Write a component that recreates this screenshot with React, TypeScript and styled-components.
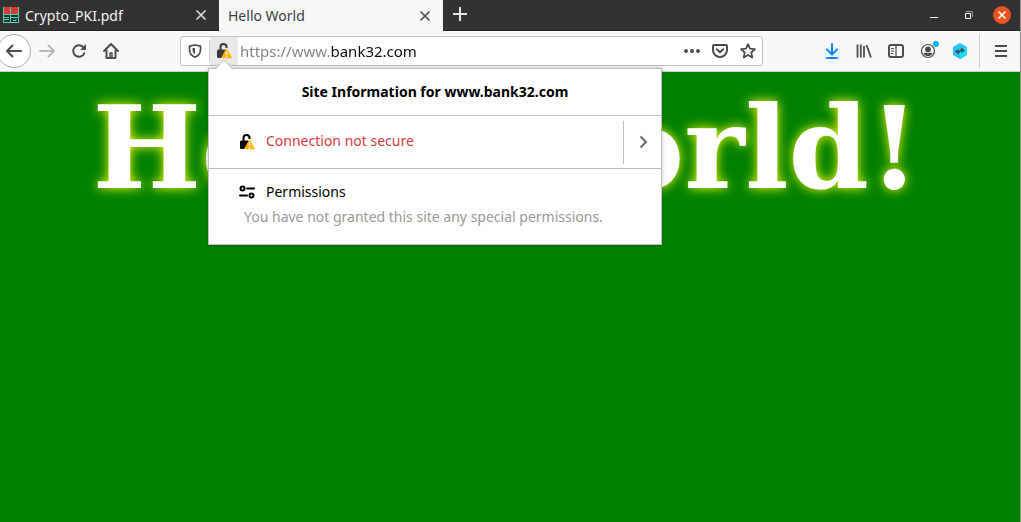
import React from 'react';
import styled, { createGlobalStyle, css } from 'styled-components';

const Global = createGlobalStyle`
  *, *::before, *::after { box-sizing: border-box; }
  html, body, #root { height: 100%; }
  body {
    margin: 0;
    overflow: hidden;
    font-family: "Noto Sans", "Open Sans", sans-serif;
    font-size: 14px;
    color: #000;
  }
  button { font: inherit; color: inherit; border: 0; padding: 0; background: none; }
  svg { display: block; flex: none; }
`;

const Window = styled.div`
  display: flex;
  flex-direction: column;
  height: 100vh;
  background: #f8f8f8;
  border-right: 1px solid #8f8f8f;
`;

const TabStrip = styled.header`
  display: flex;
  height: 31px;
  background: #333132;
  border-bottom: 1px solid #232122;
`;

const Tab = styled.div<{ $active?: boolean }>`
  display: flex;
  align-items: center;
  gap: 5px;
  height: 30px;
  padding: 0 10px 0 2px;
  width: 219px;
  color: #f4f4f4;
  ${p => p.$active && css`
    height: 31px;
    width: 224px;
    padding-left: 9px;
    background: #f8f8f8;
    color: #3c3c40;
  `}
`;

const TabTitle = styled.span`
  flex: 1;
  white-space: nowrap;
`;

const IconButton = styled.button<{ $size?: number }>`
  display: flex;
  align-items: center;
  justify-content: center;
  width: ${p => p.$size ?? 32}px;
  height: ${p => p.$size ?? 32}px;
`;

const NewTab = styled(IconButton)`
  height: 30px;
  width: 34px;
`;

const WindowControls = styled.div`
  display: flex;
  align-items: center;
  gap: 15px;
  height: 30px;
  margin-left: auto;
  padding-right: 9px;
`;

const CloseWindow = styled(IconButton)`
  border-radius: 50%;
  background: #e95420;
`;

const Toolbar = styled.nav`
  display: flex;
  align-items: center;
  height: 41px;
  border-bottom: 1px solid #ccc;
  color: #4c4c4f;
`;

const BackButton = styled(IconButton)`
  border: 1px solid #b1b1b1;
  border-radius: 50%;
  background: #fff;
  margin-left: -3px;
`;

const AddressBar = styled.div`
  position: relative;
  display: flex;
  align-items: center;
  flex: 1;
  height: 30px;
  margin: 0 53px;
  border: 1px solid #c0c0c0;
  border-radius: 3px;
  background: #fff;
`;

const ShieldButton = styled(IconButton)`
  border-right: 1px solid #ccc;
  width: 29px;
  height: 22px;
`;

const IdentityButton = styled(IconButton)`
  background: #e8e8e8;
  width: 28px;
  height: 28px;
`;

const UrlInput = styled.input`
  flex: 1;
  min-width: 0;
  height: 28px;
  border: 0;
  padding: 0 0 0 2px;
  outline: 0;
  font: inherit;
  font-size: 15px;
  color: transparent;
  background: linear-gradient(to right, #808080 92px, #0c0c0d 92px);
  background-clip: text;
`;

const ToolGroup = styled.div`
  display: flex;
  align-items: center;
`;

const MenuArea = styled.div`
  display: flex;
  align-items: center;
  height: 34px;
  margin-left: 3px;
  padding: 0 3px 0 5px;
  border-left: 1px solid #ccc;
`;

const Page = styled.main`
  flex: 1;
  overflow: hidden;
  background: green;
`;

const Heading = styled.h1`
  margin: 9px 8px 0 0;
  text-align: center;
  white-space: nowrap;
  font: bold 115px/134px "DejaVu Serif", serif;
  font-kerning: none;
  color: #fff;
  text-shadow: 0 0 12px yellow;
`;

const Popup = styled.section`
  position: absolute;
  top: 31px;
  left: 27px;
  width: 454px;
  z-index: 1;
  border: 1px solid #bfbfbf;
  background: #fff;
  color: #000;
  box-shadow: 0 0 4px rgba(0, 0, 0, 0.25);
`;

const PopupArrow = styled.svg`
  position: absolute;
  top: -10px;
  left: 6px;
`;

const PopupTitle = styled.h2`
  margin: 0;
  text-align: center;
  font-size: 14px;
  line-height: 46px;
  border-bottom: 1px solid #bfbfbf;
`;

const Connection = styled.div`
  display: flex;
  align-items: center;
  height: 53px;
  padding-left: 30px;
  border-bottom: 1px solid #bfbfbf;
  gap: 11px;
  color: #d7393f;
`;

const ConnectionText = styled.span`
  flex: 1;
  padding-bottom: 3px;
`;

const DetailsButton = styled(IconButton)`
  width: 38px;
  height: 43px;
  border-left: 1px solid #bfbfbf;
`;

const Permissions = styled.div`
  padding: 13px 30px 17px;
`;

const PermissionsTitle = styled.h3`
  display: flex;
  align-items: center;
  gap: 11px;
  margin: 0;
  font-size: 14px;
  font-weight: 400;
  line-height: 20px;
`;

const PermissionsText = styled.p`
  margin: 5px 0 0 5px;
  line-height: 20px;
  color: #999;
`;

const CloseIcon = ({ color = '#4c4c4f' }: { color?: string }) => (
  <svg width="16" height="16" viewBox="0 0 16 16" fill="none" stroke={color} strokeWidth="1.7">
    <path d="M3.5 3.5l9 9M12.5 3.5l-9 9" />
  </svg>
);

const ArrowIcon = ({ flip = false, color = '#4c4c4f' }: { flip?: boolean; color?: string }) => (
  <svg width="18" height="18" viewBox="0 0 18 18" fill="none" stroke={color} strokeWidth="2" strokeLinecap="round" strokeLinejoin="round">
    <path d={flip ? 'M2 9h14M10.500 3.500L16 9l-5.500 5.500' : 'M16 9H2M7.500 3.500L2 9l5.500 5.500'} />
  </svg>
);

const LockIcon = ({ color }: { color: string }) => (
  <svg width="16" height="16" viewBox="0 0 16 16">
    <path d="M3.500 8V4.500a3 3 0 0 1 6 0v1" fill="none" stroke={color} strokeWidth="2" transform="translate(1 -.5)" />
    <rect x="1" y="6.500" width="9" height="8.500" rx="1.500" fill={color} />
    <path d="M10.500 6.500L15 14.500H6z" fill="#ffb200" stroke="#ffb200" strokeWidth="1.500" strokeLinejoin="round" />
    <path d="M10.500 8.500v3.500M10.500 13v1.400" stroke="#fff" strokeWidth="1.400" />
  </svg>
);

export default function App() {
  return (
    <Window>
      <Global />
      <TabStrip>
        <Tab>
          <svg width="18" height="18" viewBox="0 0 18 18">
            <rect x="1" width="16" height="16" y="1" fill="#54d0b4" />
            <path d="M2 1h6v7H2zM9 1h7v7H9z" fill="#e8392c" />
            <path d="M2 9h6v7H2zM9 9h7v2H9zM9 12h7v4H9z" fill="#17332f" />
            <path d="M2 3.500h4M4 6h4M11 3.500h5M9 6h4" stroke="#8c4a3c" />
            <path d="M2 11.500h5M2 13.500h5M11 14.500h3v-1.500" stroke="#54d0b4" fill="none" />
          </svg>
          <TabTitle>Crypto_PKI.pdf</TabTitle>
          <IconButton $size={16} aria-label="Close tab"><CloseIcon color="#d8d8d8" /></IconButton>
        </Tab>
        <Tab $active>
          <TabTitle>Hello World</TabTitle>
          <IconButton $size={16} aria-label="Close tab"><CloseIcon /></IconButton>
        </Tab>
        <NewTab aria-label="New tab">
          <svg width="16" height="16" viewBox="0 0 16 16" stroke="#e6e6e6" strokeWidth="2"><path d="M1 7h14M8 0v14" /></svg>
        </NewTab>
        <WindowControls>
          <IconButton $size={18} aria-label="Minimize">
            <svg width="18" height="18" viewBox="0 0 18 18"><path d="M3 11h8v1H3z" fill="#fff" /></svg>
          </IconButton>
          <IconButton $size={18} aria-label="Restore">
            <svg width="18" height="18" viewBox="0 0 18 18" fill="none"><path d="M6 5.500h6.500V11" stroke="#999" /><path d="M5.500 7.500h5v5h-5z" stroke="#fff" /></svg>
          </IconButton>
          <CloseWindow $size={18} aria-label="Close window">
            <svg width="18" height="18" viewBox="0 0 18 18" stroke="#fff" strokeWidth="1.500"><path d="M5.500 5.500l7 7M12.500 5.500l-7 7" /></svg>
          </CloseWindow>
        </WindowControls>
      </TabStrip>
      <Toolbar>
        <BackButton $size={34} aria-label="Back"><ArrowIcon /></BackButton>
        <IconButton aria-label="Forward"><ArrowIcon flip color="#b8b8b8" /></IconButton>
        <IconButton aria-label="Reload">
          <svg width="16" height="16" viewBox="0 0 16 16" fill="none" stroke="currentColor" strokeWidth="2" strokeLinecap="round"><path d="M13.300 10.300A5.800 5.800 0 1 1 12.500 4.300" /><path d="M15 1v6H9z" fill="currentColor" stroke="none" /></svg>
        </IconButton>
        <IconButton aria-label="Home">
          <svg width="16" height="16" viewBox="0 0 16 16" fill="none" stroke="currentColor" strokeWidth="2" strokeLinecap="round" strokeLinejoin="round"><path d="M1 8l7-7 7 7M3.500 7.500V15h9V7.500" /><path d="M7 14v-4h2v4" strokeWidth="1.500" /></svg>
        </IconButton>
        <AddressBar>
          <ShieldButton aria-label="Tracking protection">
            <svg width="14" height="14" viewBox="0 0 14 14"><path d="M7 1l5.500 1.200v3.300c0 3.300-1.500 6-5.500 7.700-4-1.700-5.500-4.400-5.500-7.700V2.200z" fill="none" stroke="currentColor" strokeWidth="1.700" strokeLinejoin="round" /><path d="M7 3.700v6.600C5.300 9.200 4.500 7.600 4.500 5.500V4.200z" fill="currentColor" /></svg>
          </ShieldButton>
          <IdentityButton aria-label="Site information"><LockIcon color="#38383d" /></IdentityButton>
          <UrlInput aria-label="Address" defaultValue="https://www.bank32.com" />
          <ToolGroup>
            <IconButton $size={28} aria-label="Page actions">
              <svg width="16" height="16" viewBox="0 0 16 16" fill="currentColor"><circle cx="2" cy="8" r="2" /><circle cx="8" cy="8" r="2" /><circle cx="14" cy="8" r="2" /></svg>
            </IconButton>
            <IconButton $size={28} aria-label="Save to Pocket">
              <svg width="16" height="16" viewBox="0 0 16 16" fill="none" stroke="currentColor" strokeWidth="2" strokeLinecap="round" strokeLinejoin="round"><path d="M2 2h12a1 1 0 0 1 1 1v4a7 7 0 0 1-14 0V3a1 1 0 0 1 1-1zM4.800 6.300L8 9.300l3.200-3" /></svg>
            </IconButton>
            <IconButton $size={28} aria-label="Bookmark">
              <svg width="16" height="16" viewBox="0 0 16 16" fill="none" stroke="currentColor" strokeWidth="1.800" strokeLinejoin="round"><path d="M8 1.200l2 4.400 4.900.6-3.600 3.300.9 5L8 12l-4.200 2.500.9-5L1.100 6.200 6 5.600z" /></svg>
            </IconButton>
          </ToolGroup>
          <Popup aria-label="Site information">
            <PopupArrow width="18" height="11" viewBox="0 0 18 11"><path d="M0 10.500L9 1l9 9.500" fill="#fff" stroke="#bfbfbf" /><path d="M1 10h16v1H1z" fill="#fff" /></PopupArrow>
            <PopupTitle>Site Information for www.bank32.com</PopupTitle>
            <Connection>
              <LockIcon color="#000" />
              <ConnectionText>Connection not secure</ConnectionText>
              <DetailsButton aria-label="Connection details">
                <svg width="16" height="16" viewBox="0 0 16 16" fill="none" stroke="#6a6a6a" strokeWidth="2"><path d="M5.500 2.500L11 8l-5.500 5.500" /></svg>
              </DetailsButton>
            </Connection>
            <Permissions>
              <PermissionsTitle>
                <svg width="16" height="16" viewBox="0 0 16 16" fill="none" stroke="#000" strokeWidth="2"><circle cx="3.500" cy="4.500" r="2" /><path d="M8 4.500h7M1 11.500h7" strokeLinecap="round" /><circle cx="12.500" cy="11.500" r="2" /></svg>
                Permissions
              </PermissionsTitle>
              <PermissionsText>You have not granted this site any special permissions.</PermissionsText>
            </Permissions>
          </Popup>
        </AddressBar>
        <ToolGroup>
          <IconButton aria-label="Downloads">
            <svg width="16" height="16" viewBox="0 0 16 16" fill="none" stroke="#0a84ff" strokeWidth="2" strokeLinecap="round" strokeLinejoin="round"><path d="M8 1v10M3 6.500l5 5 5-5M3 15h10" /></svg>
          </IconButton>
          <IconButton aria-label="Library">
            <svg width="16" height="16" viewBox="0 0 16 16" fill="none" stroke="currentColor" strokeWidth="1.800"><path d="M1.500 1.500v13M4.800 1.500v13M8 3v11.500M10.500 2l4.500 12.500" /></svg>
          </IconButton>
          <IconButton aria-label="Sidebars">
            <svg width="16" height="16" viewBox="0 0 16 16" fill="none" stroke="currentColor"><rect x="1" y="2" width="14" height="12" rx="2" strokeWidth="2" /><path d="M8 2v12M3 5.500h3M3 8h3M3 10.500h2" strokeWidth="1.200" /></svg>
          </IconButton>
          <IconButton aria-label="Account">
            <svg width="18" height="18" viewBox="0 0 18 18" overflow="visible"><circle cx="9" cy="9" r="6.500" fill="none" stroke="currentColor" strokeWidth="1.200" /><circle cx="9" cy="7.300" r="2.900" fill="currentColor" /><path d="M4.500 11.500c1.200-1 2-.8 4.500-.3 2.500-.5 3.300-.7 4.500.3-1.500 3.400-7.500 3.400-9 0z" fill="currentColor" /><circle cx="17" cy="2" r="3" fill="#00b3f4" /></svg>
          </IconButton>
          <IconButton aria-label="Extension">
            <svg width="16" height="16" viewBox="0 0 16 16"><path d="M8 0l7 4v8l-7 4-7-4V4z" fill="#20c4f8" /><path d="M8 8l7-4v8l-7 4z" fill="#18dcfa" /><path d="M9 4.500l4 3-3.500 2.500V8.500H8v-2h1zM7 11.500l-4-3L6.500 6v1.500H8v2H7z" fill="#38505a" /></svg>
          </IconButton>
        </ToolGroup>
        <MenuArea>
          <IconButton aria-label="Open menu">
            <svg width="14" height="14" viewBox="0 0 14 14" stroke="currentColor" strokeWidth="2"><path d="M1 2h12M1 7h12M1 12h12" /></svg>
          </IconButton>
        </MenuArea>
      </Toolbar>
      <Page>
        <Heading>Hello World!</Heading>
      </Page>
    </Window>
  );
}
